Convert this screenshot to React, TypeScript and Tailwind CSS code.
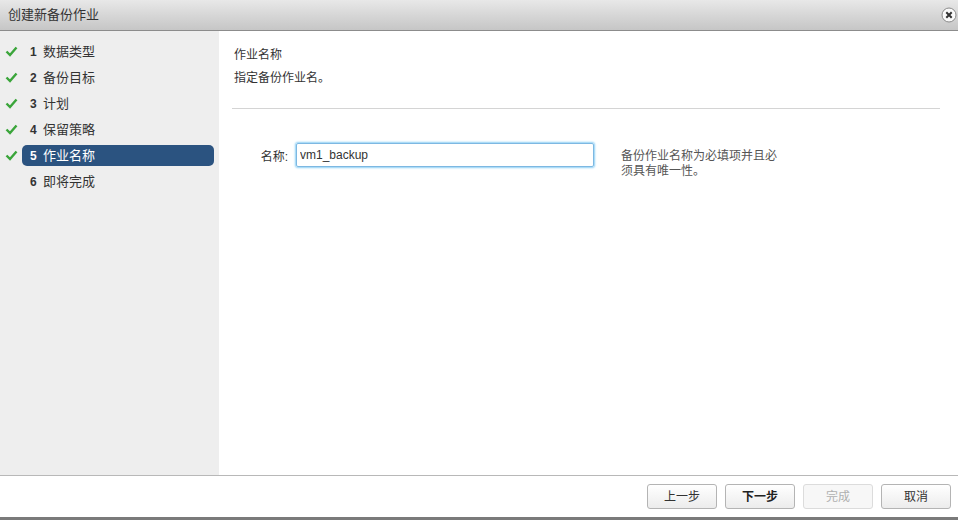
import React, { useState } from 'react';

const steps = [
  { n: 1, label: '数据类型', done: true },
  { n: 2, label: '备份目标', done: true },
  { n: 3, label: '计划', done: true },
  { n: 4, label: '保留策略', done: true },
  { n: 5, label: '作业名称', done: true },
  { n: 6, label: '即将完成', done: false },
];

function Check() {
  return (
    <svg width="13" height="11" viewBox="0 0 13 11" className="shrink-0">
      <path d="M1.5 5.5 L5 9 L11.5 1.5" fill="none" stroke="#3aa53a" strokeWidth="2.4" />
    </svg>
  );
}

function CloseIcon() {
  return (
    <svg width="16" height="16" viewBox="0 0 16 16">
      <circle cx="8" cy="8" r="7" fill="#fafafa" stroke="#8a8a8a" strokeWidth="1" />
      <path d="M5.3 5.3 L10.7 10.7 M10.7 5.3 L5.3 10.7" stroke="#333" strokeWidth="2" />
    </svg>
  );
}

export default function App() {
  const [name, setName] = useState('vm1_backup');
  const active = 5;

  return (
    <div
      className="w-[958px] h-[520px] flex flex-col bg-white text-[12px] text-[#333]"
      style={{ fontFamily: '"Liberation Sans", Arial, "Noto Sans CJK SC", sans-serif' }}
    >
      {/* Title bar */}
      <div className="h-[31px] shrink-0 flex items-center justify-between pl-[8px] pr-[1px] bg-gradient-to-b from-[#e8e8e8] to-[#c6c6c6] border-b border-[#8c8c8c]">
        <span className="text-[13px] text-[#333]">创建新备份作业</span>
        <CloseIcon />
      </div>

      {/* Body */}
      <div className="flex flex-1 min-h-0">
        {/* Steps sidebar */}
        <div className="w-[219px] shrink-0 bg-[#eeeeee] pt-[10px] flex flex-col gap-[5px]">
          {steps.map((s) => (
            <div key={s.n} className="flex items-center h-[21px]">
              <div className="w-[22px] pl-[5px] flex items-center">{s.done && <Check />}</div>
              <div
                className={
                  s.n === active
                    ? 'flex items-center w-[192px] h-[21px] rounded-[5px] bg-[#2b5380] text-white pl-[8px]'
                    : 'flex items-center w-[192px] h-[21px] pl-[8px] text-[#333]'
                }
              >
                <span className="font-bold w-[13px]">{s.n}</span>
                <span className="text-[13px]">{s.label}</span>
              </div>
            </div>
          ))}
        </div>

        {/* Content */}
        <div className="flex-1 pl-[13px] pr-[18px] pt-[15px]">
          <div className="pl-[2px] text-[12px] text-[#333] leading-[18px]">作业名称</div>
          <div className="pl-[2px] mt-[5px] text-[12px] text-[#333] leading-[18px]">指定备份作业名。</div>
          <div className="mt-[21px] border-t border-[#d4d4d4]" />
          <div className="flex items-start mt-[34px]">
            <label className="w-[64px] text-right pr-[8px] pt-[5px] text-[#333]">名称:</label>
            <input
              value={name}
              onChange={(e) => setName(e.target.value)}
              className="w-[298px] h-[24px] px-[3px] border border-[#7db8e2] rounded-[2px] outline-none shadow-[0_0_2px_1px_#8fd0f5] text-[12px] text-[#333]"
            />
            <div className="ml-[27px] w-[165px] pt-[6px] leading-[15px] text-[#555]">
              备份作业名称为必填项并且必须具有唯一性。
            </div>
          </div>
        </div>
      </div>

      {/* Footer */}
      <div className="h-[45px] shrink-0 border-t border-[#b8b8b8] flex items-center justify-end gap-[8px] pr-[7px] border-b-[3px] border-b-[#7a7a7a]">
        <button className="w-[70px] h-[25px] rounded-[3px] border border-[#b4b4b4] bg-gradient-to-b from-white to-[#ececec] text-[12px] text-[#333]">
          上一步
        </button>
        <button className="w-[70px] h-[25px] rounded-[3px] border border-[#b4b4b4] bg-gradient-to-b from-white to-[#ececec] text-[12px] font-bold text-[#222]">
          下一步
        </button>
        <button disabled className="w-[70px] h-[25px] rounded-[3px] border border-[#dcdcdc] bg-[#f7f7f7] text-[12px] text-[#b0b0b0]">
          完成
        </button>
        <button className="w-[70px] h-[25px] rounded-[3px] border border-[#b4b4b4] bg-gradient-to-b from-white to-[#ececec] text-[12px] text-[#333]">
          取消
        </button>
      </div>
    </div>
  );
}
